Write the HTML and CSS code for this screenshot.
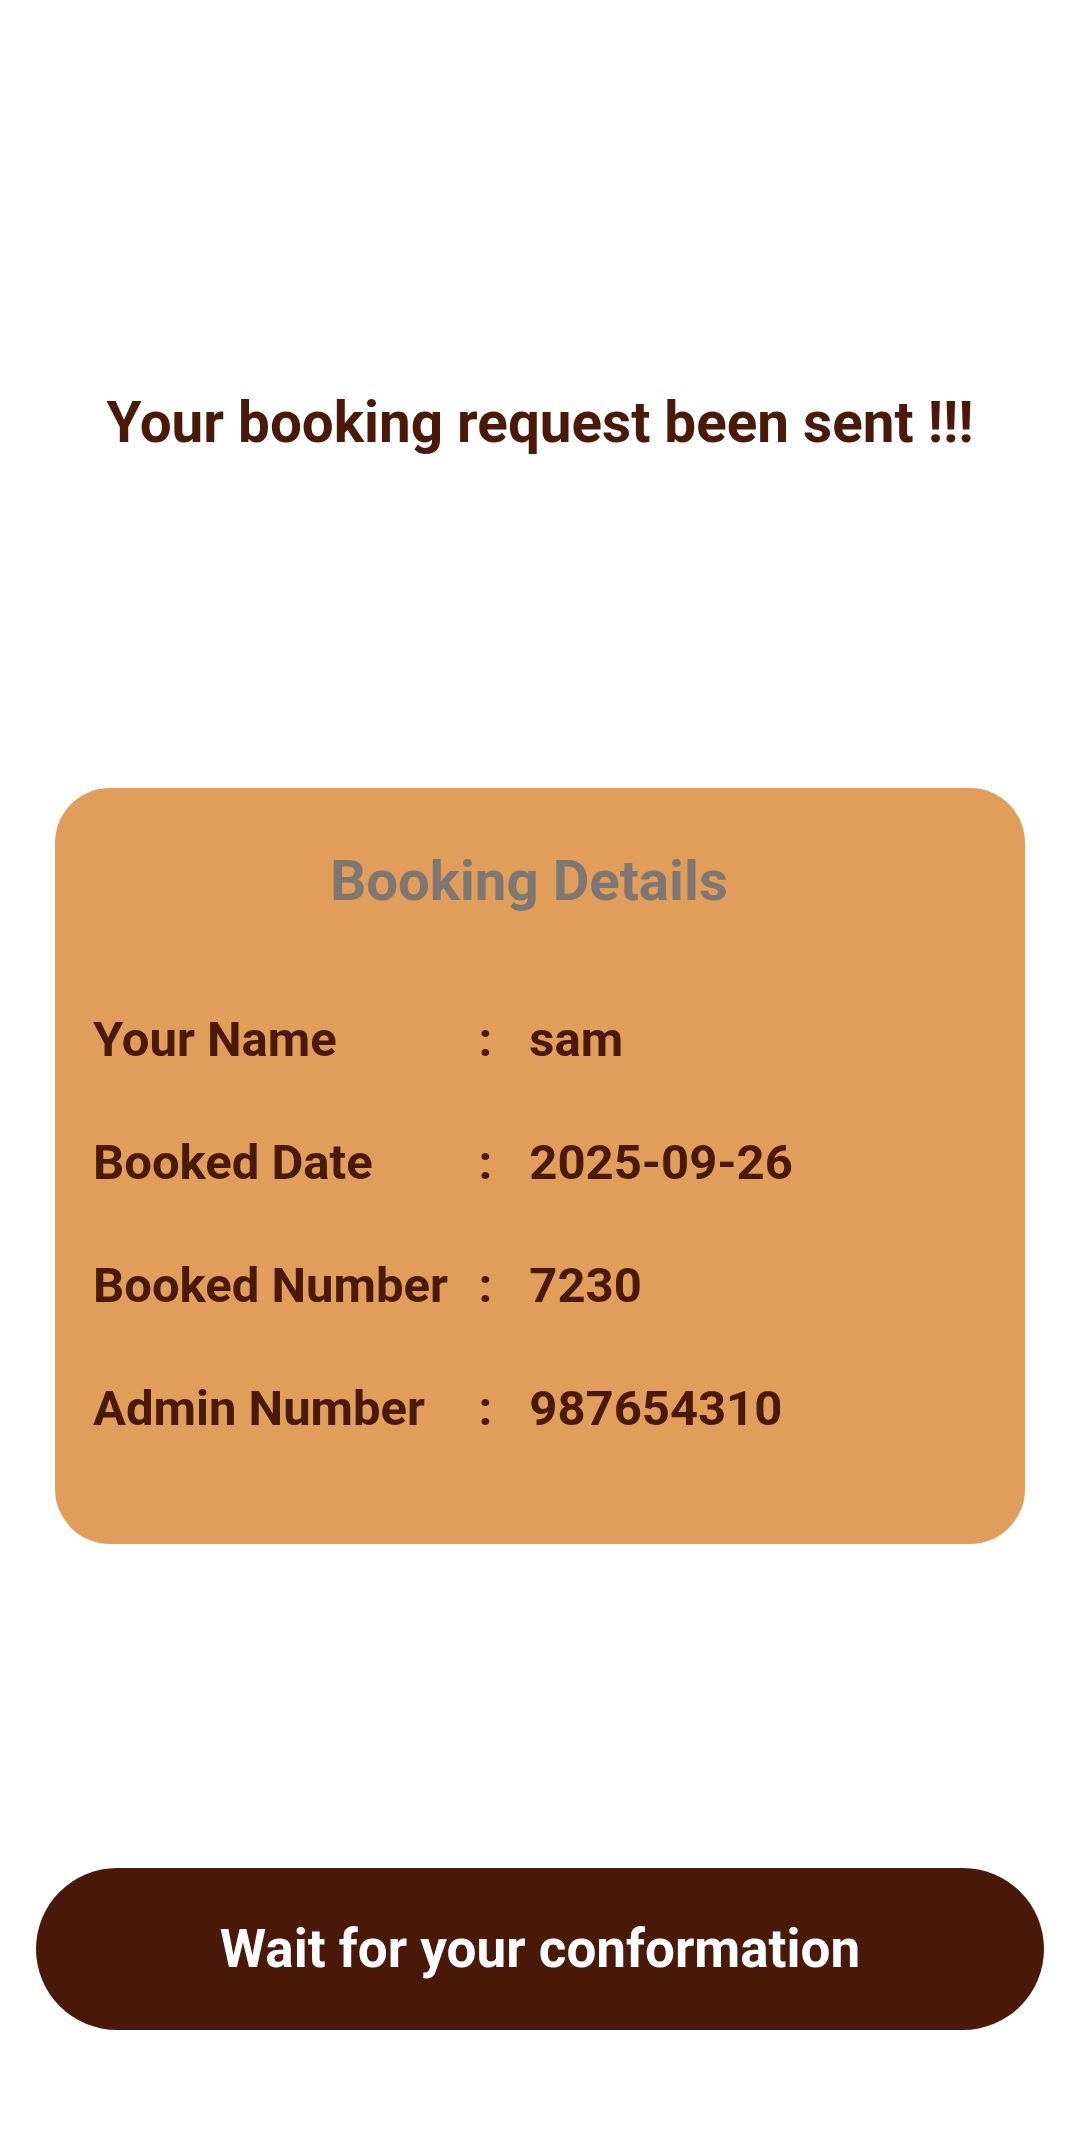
FILE: index.html
```html
<!DOCTYPE html>
<html lang="en">
<head>
<meta charset="utf-8">
<title>Booking Sent</title>
<link rel="stylesheet" href="styles.css">
</head>
<body>
<main class="page">
  <h1 class="headline">Your booking request been sent !!!</h1>
  <section class="card">
    <h2 class="card-title">Booking Details</h2>
    <div class="rows">
      <div class="row"><span class="label">Your Name</span><span class="colon">:</span><span class="value">sam</span></div>
      <div class="row"><span class="label">Booked Date</span><span class="colon">:</span><span class="value">2025-09-26</span></div>
      <div class="row"><span class="label">Booked Number</span><span class="colon">:</span><span class="value">7230</span></div>
      <div class="row"><span class="label">Admin Number</span><span class="colon">:</span><span class="value">987654310</span></div>
    </div>
  </section>
  <button class="wait-btn" type="button">Wait for your conformation</button>
</main>
</body>
</html>
```
FILE: styles.css
```css
html, body {
  margin: 0;
  padding: 0;
  background: #ffffff;
}
body {
  font-family: Roboto, "Noto Sans", "Liberation Sans", sans-serif;
  width: 1080px;
  height: 2148px;
  overflow: hidden;
}
.page {
  display: flex;
  flex-direction: column;
  align-items: center;
  padding-top: 390px;
}
.headline {
  margin: 0;
  font-size: 56.6px;
  line-height: 66px;
  font-weight: 700;
  color: #4a190a;
  text-align: center;
}
.card {
  margin-top: 332px;
  width: 970px;
  box-sizing: border-box;
  background: #e09e5a;
  border-radius: 55px;
  padding: 60px 38px 105px 38px;
}
.card-title {
  margin: 0;
  padding-right: 22px;
  font-size: 56.4px;
  line-height: 66px;
  font-weight: 700;
  color: #7d7672;
  text-align: center;
}
.rows {
  margin-top: 96px;
  display: flex;
  flex-direction: column;
  gap: 63px;
}
.row {
  display: grid;
  grid-template-columns: 385.5px auto 1fr;
  font-size: 49px;
  line-height: 60px;
  font-weight: 700;
  color: #4a190a;
}
.colon {
  margin-right: 37px;
}
.wait-btn {
  margin-top: 324px;
  width: 1008px;
  height: 162px;
  border: none;
  border-radius: 81px;
  background: #4a190a;
  color: #ffffff;
  font-family: Roboto, "Noto Sans", "Liberation Sans", sans-serif;
  font-size: 53px;
  font-weight: 700;
  padding: 0;
  cursor: pointer;
}
```
